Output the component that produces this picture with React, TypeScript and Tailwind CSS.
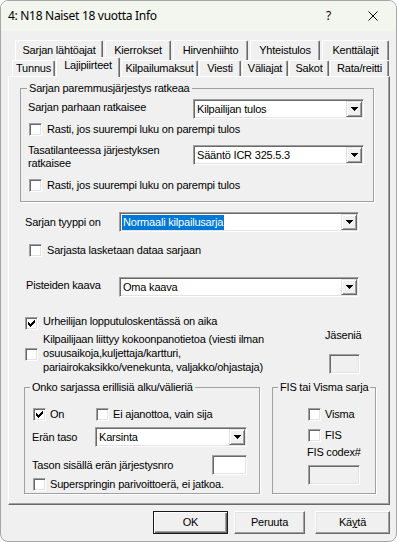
import React from "react";

const SUNKEN =
  "border border-t-[#a0a0a0] border-l-[#a0a0a0] border-r-white border-b-white shadow-[inset_1px_1px_0_#696969,inset_-1px_-1px_0_#e3e3e3]";

function Check({ checked = false }: { checked?: boolean }) {
  return (
    <span className={"flex h-[13px] w-[13px] shrink-0 items-center justify-center bg-white " + SUNKEN}>
      {checked && (
        <svg width="7" height="7" viewBox="0 0 7 7" shapeRendering="crispEdges">
          <path
            d="M6 0h1v1h-1z M5 1h2v1h-2z M0 2h1v1h-1z M4 2h3v1h-3z M0 3h2v1h-2z M3 3h3v1h-3z M0 4h5v1h-5z M1 5h3v1h-3z M2 6h1v1h-1z"
            fill="#000"
          />
        </svg>
      )}
    </span>
  );
}

function DropBtn() {
  return (
    <div className="mr-[1px] flex h-[16px] w-[16px] shrink-0 items-center justify-center border border-t-[#e3e3e3] border-l-[#e3e3e3] border-r-[#696969] border-b-[#696969] bg-[#f0f0f0] shadow-[inset_1px_1px_0_#fff,inset_-1px_-1px_0_#a0a0a0]">
      <svg width="7" height="4" viewBox="0 0 7 4" shapeRendering="crispEdges">
        <path d="M0 0h7v1h-7z M1 1h5v1h-5z M2 2h3v1h-3z M3 3h1v1h-1z" fill="#000" />
      </svg>
    </div>
  );
}

function Combo({
  value,
  className = "",
  selected = false,
}: {
  value: string;
  className?: string;
  selected?: boolean;
}) {
  return (
    <div className={"flex h-[20px] shrink-0 items-center bg-white " + SUNKEN + " " + className}>
      <div className="flex-1 overflow-hidden whitespace-nowrap pl-[2px]">
        <span
          className={
            selected
              ? "inline-block bg-[#0078d7] px-[1px] leading-[15px] text-white"
              : "inline-block px-[1px] leading-[15px]"
          }
        >
          {value}
        </span>
      </div>
      <DropBtn />
    </div>
  );
}

function TextBox({ className = "", disabled = false }: { className?: string; disabled?: boolean }) {
  return (
    <div
      className={
        "h-[20px] shrink-0 " + SUNKEN + " " + (disabled ? "bg-[#f0f0f0] " : "bg-white ") + className
      }
    />
  );
}

function Tab({
  label,
  className = "",
  selected = false,
}: {
  label: string;
  className?: string;
  selected?: boolean;
}) {
  const base =
    "flex shrink-0 justify-center whitespace-nowrap rounded-t-[2px] border-l border-t border-r border-l-white border-t-white border-r-[#696969] bg-[#f0f0f0] shadow-[inset_-1px_0_0_#a0a0a0] ";
  return (
    <div
      className={
        base +
        (selected
          ? "relative z-10 mb-[-1px] h-[20px] items-start pt-[1px] "
          : "h-full items-center ") +
        className
      }
    >
      <span className="leading-[13px]">{label}</span>
    </div>
  );
}

function Btn({
  children,
  className = "",
  isDefault = false,
}: {
  children: React.ReactNode;
  className?: string;
  isDefault?: boolean;
}) {
  return (
    <div
      className={
        "flex h-[23px] shrink-0 items-center justify-center bg-[#f0f0f0] " +
        (isDefault
          ? "border border-[#1a1a1a] shadow-[inset_1px_1px_0_#fff,inset_-1px_-1px_0_#696969,inset_-2px_-2px_0_#a0a0a0] "
          : "border border-t-[#fff] border-l-[#fff] border-r-[#696969] border-b-[#696969] shadow-[inset_-1px_-1px_0_#a0a0a0,inset_1px_1px_0_#e3e3e3] ") +
        className
      }
    >
      {children}
    </div>
  );
}

const GROUP = "border border-[#a0a0a0] shadow-[1px_1px_0_#fff]";

export default function App() {
  return (
    <div className="h-[542px] w-[397px] bg-white font-['Liberation_Sans',Arial,sans-serif] text-[11px] tracking-[-0.2px] text-black">
      <div className="flex h-full w-full flex-col overflow-hidden rounded-[8px] border border-[#a6a6a6] bg-[#f0f0f0]">
        {/* Title bar */}
        <div className="flex h-[30px] shrink-0 items-center bg-[#f3f6ef] pl-[7px] font-['Noto_Sans',sans-serif] text-[12px] tracking-[-0.3px]">
          <span className="leading-none">4: N18 Naiset 18 vuotta Info</span>
          <span className="ml-auto mr-[37px] leading-none">?</span>
          <svg className="mr-[18px]" width="10" height="10" viewBox="0 0 10 10">
            <path d="M0.5 0.5L9.5 9.5M9.5 0.5L0.5 9.5" stroke="#000" strokeWidth="1" />
          </svg>
        </div>

        {/* Tabs row 1 */}
        <div className="ml-[14px] mt-[9px] flex h-[20px] gap-[2px]">
          <Tab label="Sarjan lähtöajat" className="w-[88px]" />
          <Tab label="Kierrokset" className="w-[66px]" />
          <Tab label="Hirvenhiihto" className="w-[75px]" />
          <Tab label="Yhteistulos" className="w-[70px]" />
          <Tab label="Kenttälajit" className="w-[67px]" />
        </div>
        {/* Tabs row 2 */}
        <div className="ml-[11px] flex h-[16px] items-end gap-[1px]">
          <Tab label="Tunnus" className="w-[43px]" />
          <Tab label="Lajipiirteet" className="w-[64px]" selected />
          <Tab label="Kilpailumaksut" className="w-[77px]" />
          <Tab label="Viesti" className="w-[42px]" />
          <Tab label="Väliajat" className="w-[46px]" />
          <Tab label="Sakot" className="w-[40px]" />
          <Tab label="Rata/reitti" className="w-[59px]" />
        </div>

        {/* Panel */}
        <div className="ml-[7px] flex h-[429px] w-[382px] shrink-0 flex-col border border-t-white border-l-white border-r-[#696969] border-b-[#696969] shadow-[inset_-1px_-1px_0_#a0a0a0]">
          <fieldset className={"ml-[11px] mt-[4px] w-[354px] pb-[8px] " + GROUP}>
            <legend className="ml-[6px] px-[2px] leading-[14px]">Sarjan paremmusjärjestys ratkeaa</legend>
            <div className="mt-[4px] flex h-[20px] items-center pl-[7px]">
              <span className="w-[165px] pb-[3px]">Sarjan parhaan ratkaisee</span>
              <Combo value="Kilpailijan tulos" className="w-[171px]" />
            </div>
            <div className="mt-[2px] flex h-[16px] items-center gap-[5px] pl-[8px]">
              <Check />
              <span>Rasti, jos suurempi luku on parempi tulos</span>
            </div>
            <div className="mt-[7px] flex h-[26px] items-start pl-[7px]">
              <span className="w-[165px] leading-[13px]">
                Tasatilanteessa järjestyksen
                <br />
                ratkaisee
              </span>
              <Combo value="Sääntö ICR 325.5.3" className="mt-[1px] w-[171px]" />
            </div>
            <div className="mt-[7px] flex h-[16px] items-center gap-[5px] pl-[8px]">
              <Check />
              <span>Rasti, jos suurempi luku on parempi tulos</span>
            </div>
          </fieldset>

          <div className="ml-[16px] mt-[10px] flex h-[20px] items-center">
            <span className="w-[94px]">Sarjan tyyppi on</span>
            <Combo value="Normaali kilpailusarja" selected className="w-[240px]" />
          </div>
          <div className="ml-[20px] mt-[10px] flex h-[16px] items-center gap-[5px]">
            <Check />
            <span>Sarjasta lasketaan dataa sarjaan</span>
          </div>
          <div className="ml-[17px] mt-[19px] flex h-[20px] items-center">
            <span className="w-[93px] pb-[4px]">Pisteiden kaava</span>
            <Combo value="Oma kaava" className="w-[240px]" />
          </div>
          <div className="ml-[16px] mt-[18px] flex h-[16px] items-center gap-[5px]">
            <Check checked />
            <span className="pb-[3px]">Urheilijan lopputuloskentässä on aika</span>
          </div>
          <div className="ml-[16px] mt-[1px] flex items-start">
            <div className="mt-[16px]">
              <Check />
            </div>
            <div className="ml-[5px] w-[240px] whitespace-nowrap leading-[14px]">
              Kilpailijaan liittyy kokoonpanotietoa (viesti ilman
              <br />
              osuusaikoja,kuljettaja/kartturi,
              <br />
              pariairokaksikko/venekunta, valjakko/ohjastaja)
            </div>
            <div className="ml-[42px] mt-[-4px] flex flex-col">
              <span className="leading-[14px]">Jäseniä</span>
              <TextBox disabled className="ml-[4px] mt-[12px] w-[31px]" />
            </div>
          </div>

          <div className="ml-[15px] mt-[6px] flex items-start gap-[12px]">
            <fieldset className={"w-[236px] pb-[1px] " + GROUP}>
              <legend className="ml-[5px] px-[2px] leading-[14px]">Onko sarjassa erillisiä alku/välieriä</legend>
              <div className="mt-[12px] flex h-[16px] items-center pl-[8px]">
                <div className="flex w-[63px] items-center gap-[4px]">
                  <Check checked />
                  <span>On</span>
                </div>
                <div className="flex items-center gap-[4px]">
                  <Check />
                  <span>Ei ajanottoa, vain sija</span>
                </div>
              </div>
              <div className="mt-[5px] flex h-[20px] items-center pl-[7px]">
                <span className="w-[63px]">Erän taso</span>
                <Combo value="Karsinta" className="w-[152px]" />
              </div>
              <div className="mt-[8px] flex h-[20px] items-center pl-[7px]">
                <span className="w-[180px]">Tason sisällä erän järjestysnro</span>
                <TextBox className="w-[35px]" />
              </div>
              <div className="mt-[1px] flex h-[16px] items-center gap-[4px] pl-[8px]">
                <Check />
                <span>Superspringin parivoittoerä, ei jatkoa.</span>
              </div>
            </fieldset>

            <fieldset className={"w-[104px] pb-[8px] " + GROUP}>
              <legend className="ml-[5px] px-[2px] leading-[14px]">FIS tai Visma sarja</legend>
              <div className="mt-[12px] flex h-[16px] items-center gap-[4px] pl-[35px]">
                <Check />
                <span>Visma</span>
              </div>
              <div className="mt-[5px] flex h-[16px] items-center gap-[4px] pl-[35px]">
                <Check />
                <span>FIS</span>
              </div>
              <div className="mt-[2px] pl-[34px] leading-[14px]">FIS codex#</div>
              <TextBox disabled className="ml-[35px] mt-[6px] w-[52px]" />
            </fieldset>
          </div>
        </div>

        {/* Buttons */}
        <div className="mt-[6px] flex justify-end pr-[6px]">
          <Btn isDefault className="w-[75px]">
            OK
          </Btn>
          <Btn className="ml-[6px] w-[71px]">Peruuta</Btn>
          <Btn className="ml-[10px] w-[75px]">
            <span>
              Kä<span className="underline">y</span>tä
            </span>
          </Btn>
        </div>
      </div>
    </div>
  );
}
